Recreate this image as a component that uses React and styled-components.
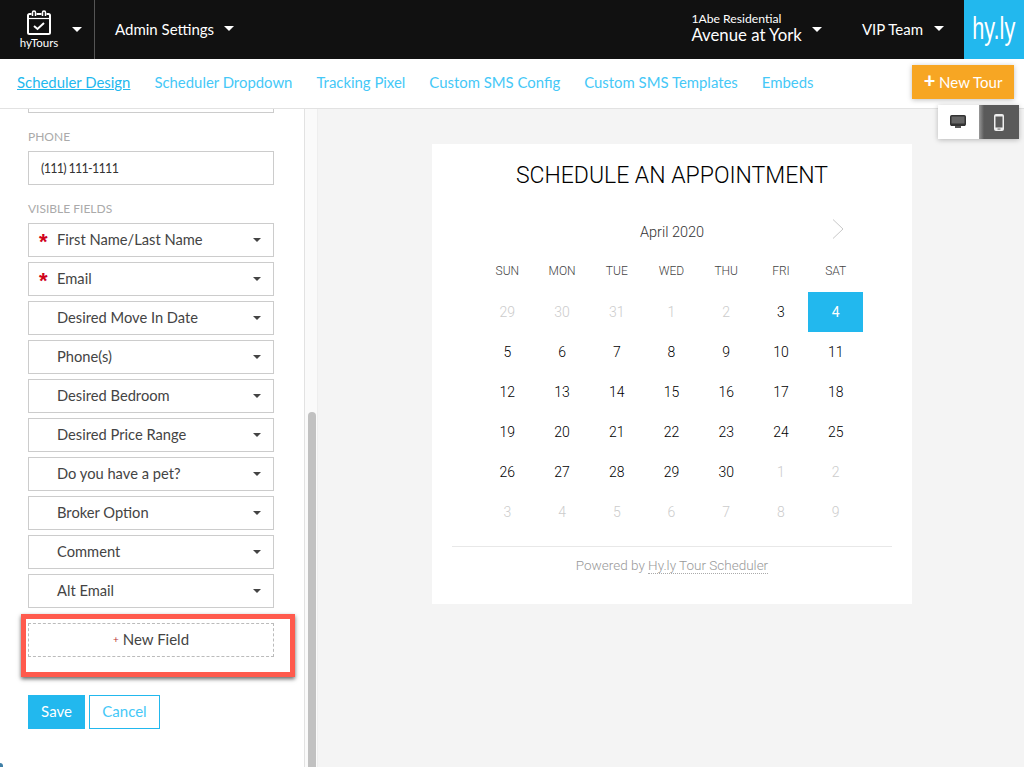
import styled, { createGlobalStyle } from "styled-components";

const fields = [
  { name: "First Name/Last Name", required: true },
  { name: "Email", required: true },
  { name: "Desired Move In Date" },
  { name: "Phone(s)" },
  { name: "Desired Bedroom" },
  { name: "Desired Price Range" },
  { name: "Do you have a pet?" },
  { name: "Broker Option" },
  { name: "Comment" },
  { name: "Alt Email" },
];

const navLinks = [
  "Scheduler Design",
  "Scheduler Dropdown",
  "Tracking Pixel",
  "Custom SMS Config",
  "Custom SMS Templates",
  "Embeds",
];

const weekDays = ["SUN", "MON", "TUE", "WED", "THU", "FRI", "SAT"];

const days = [
  ["29", true], ["30", true], ["31", true], ["1", true], ["2", true], ["3"], ["4", false, true],
  ["5"], ["6"], ["7"], ["8"], ["9"], ["10"], ["11"],
  ["12"], ["13"], ["14"], ["15"], ["16"], ["17"], ["18"],
  ["19"], ["20"], ["21"], ["22"], ["23"], ["24"], ["25"],
  ["26"], ["27"], ["28"], ["29"], ["30"], ["1", true], ["2", true],
  ["3", true], ["4", true], ["5", true], ["6", true], ["7", true], ["8", true], ["9", true],
];

export default function App() {
  return (
    <Page>
      <GlobalStyle />
      <TopBar>
        <LogoBlock>
          <LogoMark>
            <svg width="26" height="25" viewBox="0 0 26 25" fill="none" stroke="#fff" strokeWidth="2">
              <path d="M5.500 4H3.500A1.500 1.500 0 0 0 2 5.500V22.500A1.500 1.500 0 0 0 3.500 24H22.500A1.500 1.500 0 0 0 24 22.500V5.500A1.500 1.500 0 0 0 22.500 4H20.500" />
              <path d="M10.500 4H15.500" />
              <path d="M6.500 6V2.500A1.500 1.500 0 0 1 9.500 2.500V6M16.500 6V2.500A1.500 1.500 0 0 1 19.500 2.500V6" strokeWidth="1.500" />
              <path d="M2 8.500H24" strokeWidth="1.200" />
              <path d="M8 16L11.500 19L18 13" />
            </svg>
            <LogoText>hyTours</LogoText>
          </LogoMark>
          <Caret $left="13px" />
        </LogoBlock>
        <AdminMenu>
          Admin Settings
          <Caret $left="10px" />
        </AdminMenu>
        <PropertyMenu>
          <PropertyNames>
            <PropertyOwner>1Abe Residential</PropertyOwner>
            <PropertyName>Avenue at York</PropertyName>
          </PropertyNames>
          <PropertyCaret />
        </PropertyMenu>
        <TeamMenu>
          VIP Team
          <Caret $left="11px" />
        </TeamMenu>
        <Brand>
          <BrandText>hy.ly</BrandText>
        </Brand>
      </TopBar>

      <NavBar>
        {navLinks.map((link, index) => (
          <NavLink key={link} href="#" $active={index === 0}>
            {link}
          </NavLink>
        ))}
        <NewTour>
          <PlusMark>+</PlusMark> New Tour
        </NewTour>
      </NavBar>

      <Body>
        <Sidebar>
          <CutInput />
          <FieldLabel>PHONE</FieldLabel>
          <TextBox>(111) 111-1111</TextBox>
          <FieldLabel>VISIBLE FIELDS</FieldLabel>
          <FieldList>
            {fields.map((field) => (
              <FieldRow key={field.name}>
                <Star>{field.required ? "*" : ""}</Star>
                <FieldName>{field.name}</FieldName>
                <FieldCaret />
              </FieldRow>
            ))}
          </FieldList>
          <NewField>
            <SmallPlus>+</SmallPlus> New Field
          </NewField>
          <Callout />
          <Actions>
            <SaveButton>Save</SaveButton>
            <CancelButton>Cancel</CancelButton>
          </Actions>
          <CornerWidget />
        </Sidebar>

        <ScrollTrack>
          <ScrollThumb />
        </ScrollTrack>

        <Main>
          <ViewToggle>
            <ToggleButton>
              <svg width="16" height="14" viewBox="0 0 16 14">
                <rect x="0.750" y="0.750" width="14.500" height="9.500" rx="1" fill="#666" stroke="#333" strokeWidth="1.500" />
                <path d="M1 8.500H15V11H1Z" fill="#333" />
                <path d="M5 11H11V13H5Z" fill="#555" />
              </svg>
            </ToggleButton>
            <ToggleButton $active>
              <svg width="10" height="17" viewBox="0 0 10 17">
                <rect x="0" y="0" width="10" height="17" rx="2" fill="#eee" />
                <rect x="1.500" y="2.500" width="7" height="11" fill="#5a5a5a" />
                <rect x="3.500" y="14.500" width="3" height="1.200" fill="#777" />
              </svg>
            </ToggleButton>
          </ViewToggle>

          <Card>
            <CardTitle>SCHEDULE AN APPOINTMENT</CardTitle>
            <MonthRow>
              April 2020
              <NextMonth>
                <svg width="12" height="20" viewBox="0 0 12 20" fill="none" stroke="#c8c8c8">
                  <path d="M1 0.500L11 10L1 19.500" />
                </svg>
              </NextMonth>
            </MonthRow>
            <CalendarGrid>
              {weekDays.map((day) => (
                <WeekDay key={day}>{day}</WeekDay>
              ))}
              {days.map(([label, muted, selected], index) => (
                <Day key={index} $muted={muted} $selected={selected}>
                  {label}
                </Day>
              ))}
            </CalendarGrid>
            <CardFooter>
              Powered by <PoweredLink>Hy.ly Tour Scheduler</PoweredLink>
            </CardFooter>
          </Card>
        </Main>
      </Body>
    </Page>
  );
}

const GlobalStyle = createGlobalStyle`
  html, body {
    margin: 0;
    height: 100%;
    overflow: hidden;
  }
  * {
    box-sizing: border-box;
  }
`;

const Page = styled.div`
  height: 767px;
  display: flex;
  flex-direction: column;
  font-family: "Lato", "Open Sans", sans-serif;
  overflow: hidden;
`;

const TopBar = styled.header`
  height: 59px;
  flex: none;
  display: flex;
  align-items: stretch;
  background: #111;
  color: #fff;
`;

const LogoBlock = styled.div`
  width: 95px;
  display: flex;
  align-items: center;
  padding-left: 19px;
  border-right: 1px solid #555;
`;

const LogoMark = styled.div`
  width: 40px;
  display: flex;
  flex-direction: column;
  align-items: center;
  padding-top: 1px;
`;

const LogoText = styled.span`
  font-size: 11.500px;
  line-height: 14px;
  margin-top: 1px;
`;

const Caret = styled.span`
  display: inline-block;
  width: 0;
  height: 0;
  margin-left: ${(props) => props.$left};
  border-left: 5px solid transparent;
  border-right: 5px solid transparent;
  border-top: 5px solid #fff;
`;

const AdminMenu = styled.div`
  display: flex;
  align-items: center;
  margin-left: 20px;
  padding-bottom: 2px;
  font-size: 15px;
`;

const PropertyMenu = styled.div`
  display: flex;
  margin-left: auto;
  padding-top: 11px;
`;

const PropertyNames = styled.div`
  display: flex;
  flex-direction: column;
`;

const PropertyOwner = styled.span`
  font-size: 12.200px;
  line-height: 15px;
`;

const PropertyName = styled.span`
  font-size: 16.800px;
  line-height: 17px;
`;

const PropertyCaret = styled(Caret)`
  margin: 16px 0 0 10px;
`;

const TeamMenu = styled.div`
  display: flex;
  align-items: center;
  margin: 0 20px 0 40px;
  padding-bottom: 2px;
  font-size: 15px;
`;

const Brand = styled.div`
  width: 60px;
  display: flex;
  align-items: center;
  justify-content: center;
  background: #22b8ee;
  padding-bottom: 3px;
`;

const BrandText = styled.span`
  display: inline-block;
  font-family: "Liberation Sans", sans-serif;
  font-size: 32px;
  transform: scaleX(0.68);
`;

const NavBar = styled.nav`
  height: 50px;
  flex: none;
  display: flex;
  align-items: center;
  gap: 24px;
  padding: 0 10px 3px 17px;
  background: #fff;
  border-bottom: 1px solid #e2e2e2;
`;

const NavLink = styled.a`
  font-size: 14.900px;
  color: ${(props) => (props.$active ? "#22b8ee" : "#45c8f7")};
  text-decoration: ${(props) => (props.$active ? "underline" : "none")};
`;

const NewTour = styled.button`
  width: 102px;
  height: 34px;
  margin: 0 0 0 auto;
  border: 0;
  padding: 0 0 2px;
  background: #f7a623;
  color: #fff;
  font-family: inherit;
  font-size: 15px;
  box-shadow: 0 1px 5px rgba(0, 0, 0, 0.25);
`;

const PlusMark = styled.span`
  font-weight: 900;
  font-size: 20px;
  line-height: 18px;
`;

const Body = styled.div`
  flex: 1;
  min-height: 0;
  display: flex;
`;

const Sidebar = styled.aside`
  position: relative;
  width: 305px;
  flex: none;
  padding: 0 30px 0 28px;
  background: #fff;
  border-right: 1px solid #e2e2e2;
`;

const CutInput = styled.div`
  height: 4px;
  border: 1px solid #ccc;
  border-top: 0;
`;

const FieldLabel = styled.div`
  margin: 16px 0 7px;
  font-size: 12px;
  line-height: 15px;
  color: #aaa;
`;

const TextBox = styled.div`
  height: 34px;
  display: flex;
  align-items: center;
  padding-left: 12px;
  border: 1px solid #ccc;
  font-size: 12.500px;
  letter-spacing: -0.700px;
  color: #333;
`;

const FieldList = styled.div`
  display: flex;
  flex-direction: column;
  gap: 5px;
`;

const FieldRow = styled.div`
  height: 34px;
  display: flex;
  align-items: center;
  padding: 0 12px 2px 10px;
  border: 1px solid #ccc;
`;

const Star = styled.span`
  width: 18px;
  height: 14px;
  flex: none;
  font-family: "Liberation Sans", sans-serif;
  font-size: 22px;
  font-weight: 700;
  line-height: 20px;
  color: #d0021b;
`;

const FieldName = styled.span`
  flex: 1;
  font-size: 14.700px;
  color: #444;
`;

const FieldCaret = styled.span`
  width: 0;
  height: 0;
  margin-top: 2px;
  border-left: 4px solid transparent;
  border-right: 4px solid transparent;
  border-top: 4px solid #444;
`;

const NewField = styled.div`
  height: 34px;
  margin-top: 15px;
  display: flex;
  align-items: center;
  justify-content: center;
  gap: 4px;
  padding-bottom: 2px;
  border: 1px dashed #bbb;
  font-size: 15px;
  color: #444;
`;

const SmallPlus = styled.span`
  font-size: 10px;
  color: #b33;
`;

const Callout = styled.div`
  position: absolute;
  left: 21px;
  top: 505px;
  width: 274px;
  height: 63px;
  border: 5px solid #ff5a4d;
  box-shadow: 0 2px 4px rgba(0, 0, 0, 0.6);
`;

const Actions = styled.div`
  display: flex;
  gap: 4px;
  margin-top: 38px;
`;

const SaveButton = styled.button`
  width: 57px;
  height: 34px;
  border: 0;
  padding: 0 0 2px;
  background: #22b8ee;
  color: #fff;
  font-family: inherit;
  font-size: 15px;
`;

const CancelButton = styled.button`
  width: 71px;
  height: 34px;
  padding: 0 0 2px;
  border: 1px solid #22b8ee;
  background: #fff;
  color: #45c8f7;
  font-family: inherit;
  font-size: 15px;
`;

const CornerWidget = styled.div`
  position: absolute;
  left: 0;
  bottom: 0;
  width: 3px;
  height: 4px;
  background: #3f7fa6;
  border-top-right-radius: 3px;
`;

const ScrollTrack = styled.div`
  width: 13px;
  flex: none;
  display: flex;
  align-items: flex-end;
  padding-left: 3px;
  background: #fafafa;
  border-right: 1px solid #eee;
`;

const ScrollThumb = styled.div`
  width: 8px;
  height: 355px;
  background: #c1c1c1;
  border-radius: 4px 4px 0 0;
`;

const Main = styled.main`
  position: relative;
  flex: 1;
  padding: 35px 0 0 114px;
  background: #f4f4f4;
  font-family: "Roboto", "Liberation Sans", Arial, sans-serif;
  font-weight: 300;
`;

const ViewToggle = styled.div`
  position: absolute;
  top: -4px;
  right: 5px;
  display: flex;
  box-shadow: 0 1px 5px rgba(0, 0, 0, 0.25);
`;

const ToggleButton = styled.div`
  width: 40.500px;
  height: 34px;
  display: flex;
  align-items: center;
  justify-content: center;
  background: ${(props) => (props.$active ? "linear-gradient(to right, #999, #5a5a5a 5px)" : "#fff")};
`;

const Card = styled.section`
  width: 480px;
  height: 460px;
  display: flex;
  flex-direction: column;
  align-items: center;
  padding: 0 20px;
  background: #fff;
`;

const CardTitle = styled.h1`
  margin: 18px 0 0;
  font-size: 23px;
  font-weight: 300;
  line-height: 28px;
  color: #000;
`;

const MonthRow = styled.div`
  position: relative;
  width: 383px;
  margin: 29px 0 0;
  font-size: 14.500px;
  line-height: 28px;
  text-align: center;
  color: #333;
`;

const NextMonth = styled.span`
  position: absolute;
  right: 20px;
  top: 0;
  line-height: 0;
`;

const CalendarGrid = styled.div`
  width: 383px;
  margin: 5px 2px 0 0;
  display: grid;
  grid-template-columns: repeat(7, 1fr);
  grid-auto-rows: 40px;
`;

const WeekDay = styled.div`
  height: 20px;
  margin-top: 9px;
  padding-left: 1px;
  font-size: 12px;
  line-height: 20px;
  text-align: center;
  color: #444;
`;

const Day = styled.div`
  display: flex;
  align-items: center;
  justify-content: center;
  padding-left: 1px;
  font-size: 14px;
  font-weight: ${(props) => (props.$selected ? 400 : 300)};
  background: ${(props) => (props.$selected ? "#22b8ee" : "transparent")};
  color: ${(props) => (props.$selected ? "#fff" : props.$muted ? "#ccc" : "#000")};
`;

const CardFooter = styled.footer`
  width: 440px;
  margin-top: 14px;
  padding-top: 9px;
  border-top: 1px solid #e8e8e8;
  font-size: 13.500px;
  line-height: 18px;
  text-align: center;
  color: #999;
`;

const PoweredLink = styled.span`
  border-bottom: 1px dotted #aaa;
`;
